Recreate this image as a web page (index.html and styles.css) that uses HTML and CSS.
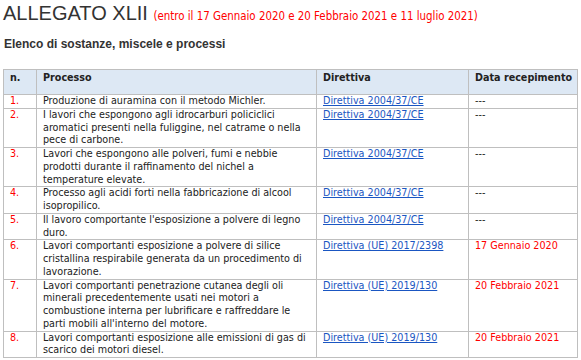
FILE: index.html
```html
<!DOCTYPE html>
<html lang="it">
<head>
<meta charset="utf-8">
<link rel="stylesheet" href="styles.css">
</head>
<body>
<h1 class="title">ALLEGATO XLII <span class="title-note">(entro il 17 Gennaio 2020 e 20 Febbraio 2021 e 11 luglio 2021)</span></h1>
<h2 class="subtitle">Elenco di sostanze, miscele e processi</h2>
<table class="list">
  <colgroup>
    <col class="c-n"><col class="c-proc"><col class="c-dir"><col class="c-date">
  </colgroup>
  <thead>
    <tr><th>n.</th><th>Processo</th><th>Direttiva</th><th>Data recepimento</th></tr>
  </thead>
  <tbody>
    <tr><td class="num">1.</td><td>Produzione di auramina con il metodo Michler.</td><td><a href="#">Direttiva 2004/37/CE</a></td><td>---</td></tr>
    <tr><td class="num">2.</td><td>I lavori che espongono agli idrocarburi policiclici aromatici presenti nella fuliggine, nel catrame o nella pece di carbone.</td><td><a href="#">Direttiva 2004/37/CE</a></td><td>---</td></tr>
    <tr><td class="num">3.</td><td>Lavori che espongono alle polveri, fumi e nebbie prodotti durante il raffinamento del nichel a temperature elevate.</td><td><a href="#">Direttiva 2004/37/CE</a></td><td>---</td></tr>
    <tr><td class="num">4.</td><td>Processo agli acidi forti nella fabbricazione di alcool isopropilico.</td><td><a href="#">Direttiva 2004/37/CE</a></td><td>---</td></tr>
    <tr><td class="num">5.</td><td>Il lavoro comportante l'esposizione a polvere di legno duro.</td><td><a href="#">Direttiva 2004/37/CE</a></td><td>---</td></tr>
    <tr><td class="num">6.</td><td>Lavori comportanti esposizione a polvere di silice cristallina respirabile generata da un procedimento di lavorazione.</td><td><a href="#">Direttiva (UE) 2017/2398</a></td><td class="red">17 Gennaio 2020</td></tr>
    <tr><td class="num">7.</td><td>Lavori comportanti penetrazione cutanea degli oli minerali precedentemente usati nei motori a combustione interna per lubrificare e raffreddare le parti mobili all'interno del motore.</td><td><a href="#">Direttiva (UE) 2019/130</a></td><td class="red">20 Febbraio 2021</td></tr>
    <tr><td class="num">8.</td><td>Lavori comportanti esposizione alle emissioni di gas di scarico dei motori diesel.</td><td><a href="#">Direttiva (UE) 2019/130</a></td><td class="red">20 Febbraio 2021</td></tr>
  </tbody>
</table>
</body>
</html>
```
FILE: styles.css
```css
html, body {
  margin: 0;
  background: #ffffff;
}
body {
  padding: 0 3px;
  color: #333333;
  font-family: "DejaVu Sans Condensed", "DejaVu Sans", sans-serif;
}
.title {
  margin: 0;
  padding-top: 1px;
  font-family: "Liberation Sans", Arial, sans-serif;
  font-weight: normal;
  font-size: 20px;
  line-height: 24px;
  color: #333333;
}
.title-note {
  font-family: "DejaVu Sans Condensed", "DejaVu Sans", sans-serif;
  font-size: 11.4px;
  color: #ff0000;
}
.subtitle {
  margin: 9px 0 0 1px;
  font-family: "Liberation Sans", Arial, sans-serif;
  font-weight: bold;
  font-size: 12px;
  line-height: 14px;
  color: #333333;
}
.list {
  margin-top: 18px;
  width: 574px;
  border-collapse: collapse;
  table-layout: fixed;
  font-size: 10.7px;
  line-height: 12.75px;
}
.c-n { width: 33px; }
.c-proc { width: 280px; }
.c-dir { width: 152px; }
.c-date { width: 109px; }
.list th, .list td {
  border: 1px solid #bfbfbf;
  padding: 0 4px 0 6px;
  vertical-align: top;
  text-align: left;
}
.list th {
  background: #dde8f4;
  font-weight: bold;
  height: 22px;
  padding-top: 2px;
  color: #222222;
}
.list td {
  color: #222222;
}
.list td.num, .list td.red {
  color: #ff0000;
}
.list a {
  color: #1a56c2;
  text-decoration: underline;
}
```
